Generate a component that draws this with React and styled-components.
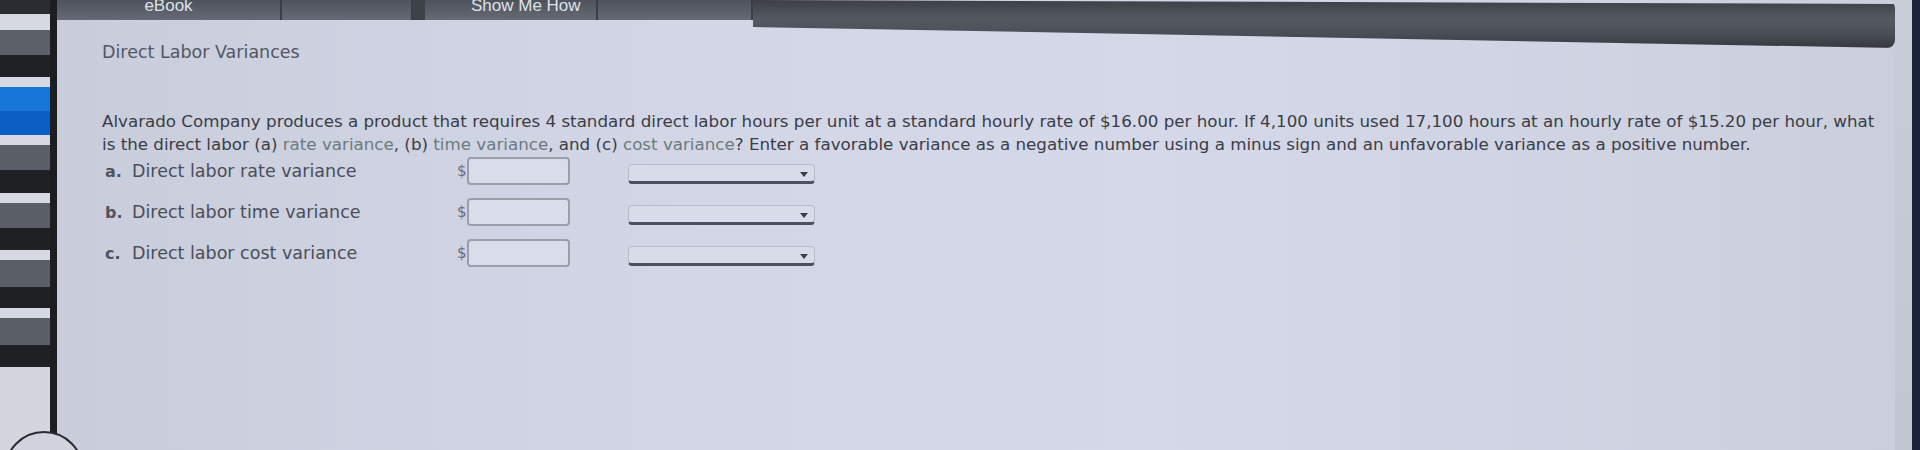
import React from 'react';
import styled, { createGlobalStyle } from 'styled-components';

const GlobalStyle = createGlobalStyle`
  html, body {
    margin: 0;
    padding: 0;
    background: #1a2438;
  }
  body {
    font-family: "DejaVu Sans", Verdana, sans-serif;
  }
`;

const stripes = [
  ['#2a2c31', 14],
  ['#d6d9e2', 16],
  ['#5c6068', 25],
  ['#202124', 22],
  ['#d6d9e2', 10],
  ['#1877d6', 24],
  ['#0a5ec4', 24],
  ['#d6d9e2', 10],
  ['#5a5e66', 25],
  ['#1f2023', 23],
  ['#d6d9e2', 10],
  ['#5a5e66', 25],
  ['#1f2023', 22],
  ['#d6d9e2', 10],
  ['#5a5e66', 27],
  ['#1f2023', 21],
  ['#d6d9e2', 10],
  ['#5a5e66', 27],
  ['#1f2023', 22],
];

const tabs = [
  { label: 'eBook', width: 225, pad: 0 },
  { label: '', width: 131, pad: 0 },
  { label: 'Show Me How', width: 185, pad: 46, gap: true },
  { label: '', width: 155, pad: 0 },
];

const rows = [
  { key: 'a', text: 'Direct labor rate variance' },
  { key: 'b', text: 'Direct labor time variance' },
  { key: 'c', text: 'Direct labor cost variance' },
];

const App = () => {
  return (
    <React.Fragment>
      <GlobalStyle />
      <Screen>
        <Sidebar>
          {stripes.map(([color, height], i) => (
            <Stripe key={i} color={color} height={height} />
          ))}
          <Knob />
        </Sidebar>
        <Main>
          <TopRow>
            <Tabs>
              {tabs.map((tab, i) => (
                <Tab key={i} width={tab.width} pad={tab.pad} gap={tab.gap}>
                  {tab.label}
                </Tab>
              ))}
            </Tabs>
            <DarkBar />
          </TopRow>
          <Content>
            <Title>Direct Labor Variances</Title>
            <Question>
              Alvarado Company produces a product that requires 4 standard direct labor hours per unit at a standard
              hourly rate of $16.00 per hour. If 4,100 units used 17,100 hours at an hourly rate of $15.20 per hour, what
              is the direct labor (a) <Term>rate variance</Term>, (b) <Term>time variance</Term>, and (c){' '}
              <Term>cost variance</Term>? Enter a favorable variance as a negative number using a minus sign and an
              unfavorable variance as a positive number.
            </Question>
            <Answers>
              {rows.map(row => (
                <AnswerRow key={row.key}>
                  <Letter>{row.key}.</Letter>
                  <Label>{row.text}</Label>
                  <Dollar>$</Dollar>
                  <AmountInput type="text" />
                  <Dropdown>
                    <Arrow />
                  </Dropdown>
                </AnswerRow>
              ))}
            </Answers>
          </Content>
        </Main>
        <RightEdge />
      </Screen>
    </React.Fragment>
  );
};

const Screen = styled.div`
  width: 1920px;
  height: 450px;
  display: flex;
  overflow: hidden;
  position: relative;
  background: #cfd3e2;
`;

const Sidebar = styled.div`
  width: 50px;
  flex: none;
  display: flex;
  flex-direction: column;
  background: #d3d6df;
  border-right: 7px solid #1c1d20;
`;

const Stripe = styled.div`
  height: ${props => props.height}px;
  background: ${props => props.color};
  flex: none;
`;

const Knob = styled.div`
  position: absolute;
  left: 4px;
  top: 431px;
  width: 76px;
  height: 76px;
  border-radius: 50%;
  border: 2px solid #2a2b30;
  background: #d0d3de;
`;

const Main = styled.div`
  flex: 1;
  display: flex;
  flex-direction: column;
  background: linear-gradient(90deg, #c9cddb 0%, #d2d6e7 35%, #d4d8e9 60%, #cbcfdd 100%);
`;

const TopRow = styled.div`
  height: 42px;
  display: flex;
  align-items: flex-start;
`;

const Tabs = styled.div`
  display: flex;
  height: 20px;
  background: #5b5f6a;
`;

const Tab = styled.div`
  width: ${props => props.width}px;
  height: 20px;
  box-sizing: border-box;
  padding-left: ${props => props.pad}px;
  border-right: 2px solid #3b3e45;
  border-left: ${props => (props.gap ? '12px solid #3e4148' : 'none')};
  background: linear-gradient(180deg, #4e525c, #666a75);
  color: #dfe1e8;
  font-family: "Liberation Sans", Arial, sans-serif;
  font-size: 17px;
  line-height: 12px;
  text-align: ${props => (props.pad ? 'left' : 'center')};
  overflow: hidden;
  white-space: nowrap;
`;

const DarkBar = styled.div`
  flex: 1;
  height: 48px;
  border-radius: 0 8px 8px 0;
  clip-path: polygon(0 0, 100% 4px, 100% 100%, 0 27px);
  background: linear-gradient(180deg, #3c3f46 0%, #555962 40%, #4a4e56 70%, #35383e 100%);
`;

const Content = styled.div`
  padding: 0 0 0 45px;
  display: flex;
  flex-direction: column;
`;

const Title = styled.div`
  font-size: 17.5px;
  line-height: 20px;
  color: #535762;
  margin-top: 0;
`;

const Question = styled.p`
  margin: 48px 0 0 0;
  width: 1775px;
  font-size: 16.7px;
  line-height: 23px;
  color: #3a3d45;
`;

const Term = styled.span`
  color: #6b7b7c;
`;

const Answers = styled.div`
  margin-top: 1px;
  display: flex;
  flex-direction: column;
  gap: 13px;
`;

const AnswerRow = styled.div`
  height: 28px;
  display: flex;
  align-items: center;
  font-size: 17.5px;
  color: #4a4e58;
`;

const Letter = styled.span`
  width: 30px;
  padding-left: 3px;
  box-sizing: border-box;
  font-weight: bold;
  font-size: 16px;
  color: #50545e;
`;

const Label = styled.span`
  width: 325px;
`;

const Dollar = styled.span`
  width: 10px;
  font-size: 15px;
  color: #6a6e78;
`;

const AmountInput = styled.input`
  width: 103px;
  height: 28px;
  box-sizing: border-box;
  border: 2px solid #9a9ea8;
  border-radius: 4px;
  background: #d9dcea;
  outline: none;
`;

const Dropdown = styled.div`
  margin-left: 58px;
  margin-top: 5px;
  width: 187px;
  height: 20px;
  box-sizing: border-box;
  border: 1px solid #b8bcc8;
  border-bottom: 3px solid #4c5060;
  border-radius: 4px;
  background: #d8dbe9;
  position: relative;
`;

const Arrow = styled.span`
  position: absolute;
  right: 6px;
  top: 7px;
  width: 0;
  height: 0;
  border-left: 4px solid transparent;
  border-right: 4px solid transparent;
  border-top: 5px solid #3a3d48;
`;

const RightEdge = styled.div`
  width: 17px;
  flex: none;
  background: linear-gradient(180deg, #c9cdd9, #c2c6d2);
  border-right: 8px solid #1a2438;
`;

export default App;
